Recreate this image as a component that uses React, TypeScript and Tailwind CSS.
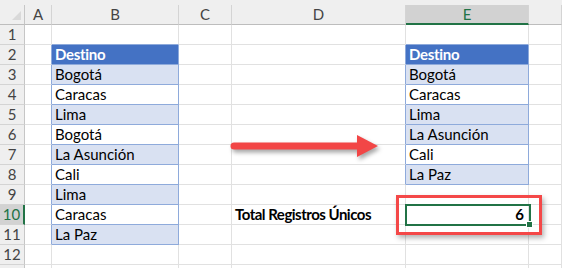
import React from 'react';

// column widths in px: row-number gutter, then A..F
const COLS = ['A', 'B', 'C', 'D', 'E', 'F'];
const ROWS = 13;

const listB: Record<number, string> = {
  2: 'Destino',
  3: 'Bogotá',
  4: 'Caracas',
  5: 'Lima',
  6: 'Bogotá',
  7: 'La Asunción',
  8: 'Cali',
  9: 'Lima',
  10: 'Caracas',
  11: 'La Paz',
};

const listE: Record<number, string> = {
  2: 'Destino',
  3: 'Bogotá',
  4: 'Caracas',
  5: 'Lima',
  6: 'La Asunción',
  7: 'Cali',
  8: 'La Paz',
};

// banded rows of each table
const bandB = [3, 5, 7, 9, 11];
const bandE = [3, 5, 6, 8];

const font = { fontFamily: 'Lato, "Open Sans", sans-serif' };

function cellClasses(col: string, row: number) {
  let bg = 'bg-white';
  let right = 'border-r-[#e1e1e1]';
  let bottom = 'border-b-[#e1e1e1]';

  const inB = col === 'B' && row >= 2 && row <= 11;
  const inE = col === 'E' && row >= 2 && row <= 8;

  if (inB || inE) {
    right = 'border-r-[#8eaadb]';
    bottom = 'border-b-[#8eaadb]';
    if (row === 2) bg = 'bg-[#4472c4]';
    else if ((inB && bandB.includes(row)) || (inE && bandE.includes(row))) bg = 'bg-[#d9e1f2]';
  }
  // left edges of the tables sit on the neighbour's right border
  if (col === 'A' && row >= 2 && row <= 11) right = 'border-r-[#8eaadb]';
  if (col === 'D' && row >= 2 && row <= 8) right = 'border-r-[#8eaadb]';
  // top edges sit on the row above
  if ((col === 'B' || col === 'E') && row === 1) bottom = 'border-b-[#8eaadb]';

  return `${bg} ${right} ${bottom}`;
}

function Cell({ col, row }: { col: string; row: number }) {
  let text = '';
  let extra = 'text-left pl-[3px]';
  let weight = '';
  let color = 'text-black';

  if (col === 'B' && listB[row]) text = listB[row];
  if (col === 'E' && listE[row]) text = listE[row];
  if ((col === 'B' || col === 'E') && row === 2) {
    weight = 'font-bold tracking-[-0.3px]';
    color = 'text-white';
  }
  if (col === 'D' && row === 10) {
    text = 'Total Registros Únicos';
    weight = 'font-bold tracking-[-0.5px]';
  }
  if (col === 'E' && row === 10) {
    text = '6';
    weight = 'font-bold';
    extra = 'text-right pr-[4px]';
  }

  return (
    <div
      className={`h-5 border-r border-b overflow-visible whitespace-nowrap text-[15px] leading-[19px] ${cellClasses(col, row)} ${extra} ${weight} ${color}`}
    >
      {text}
    </div>
  );
}

function RowHeader({ row }: { row: number }) {
  const active = row === 10;
  return (
    <div
      className={`h-5 border-b border-b-[#d4d4d4] text-center text-[15px] leading-[19px] ${
        active
          ? 'bg-[#d2d2d2] border-r-2 border-r-[#217346] text-[#217346]'
          : 'bg-[#efefef] border-r border-r-[#c6c6c6] text-[#444]'
      }`}
    >
      {row < ROWS ? row : ''}
    </div>
  );
}

function ColHeader({ col }: { col: string }) {
  const active = col === 'E';
  return (
    <div
      className={`h-5 border-r border-r-[#d4d4d4] text-center text-[15px] leading-[19px] ${
        active
          ? 'bg-[#d2d2d2] border-b-2 border-b-[#217346] text-[#217346]'
          : 'bg-[#efefef] border-b border-b-[#bdbdbd] text-[#444]'
      }`}
    >
      {col === 'F' ? '' : col}
    </div>
  );
}

export default function App() {
  const rows = Array.from({ length: ROWS }, (_, i) => i + 1);

  return (
    <div className="relative w-[562px] h-[268px] overflow-hidden bg-white" style={font}>
      <div className="h-[5px] bg-[#efefef]" />
      <div className="grid grid-cols-[25px_27px_127px_53px_174px_123px_33px]">
        {/* select-all corner */}
        <div className="relative h-5 bg-[#efefef] border-r border-r-[#c6c6c6] border-b border-b-[#bdbdbd]">
          <svg className="absolute left-[12px] top-[6px]" width="9" height="9" viewBox="0 0 9 9">
            <polygon points="9,0 9,9 0,9" fill="#d9d9d9" />
          </svg>
        </div>
        {COLS.map((c) => (
          <ColHeader key={c} col={c} />
        ))}

        {rows.map((r) => (
          <React.Fragment key={r}>
            <RowHeader row={r} />
            {COLS.map((c) => (
              <Cell key={c + r} col={c} row={r} />
            ))}
          </React.Fragment>
        ))}
      </div>

      {/* arrow between the two lists */}
      <svg
        className="absolute left-[226px] top-[130px] drop-shadow-[2px_3px_2px_rgba(0,0,0,0.35)]"
        width="160"
        height="34"
        viewBox="226 130 160 34"
      >
        <line x1="234" y1="146" x2="362" y2="146" stroke="#f24646" strokeWidth="7" strokeLinecap="round" />
        <polygon points="357,135 378,146 357,157" fill="#f24646" />
      </svg>

      {/* active cell E10 with fill handle */}
      <div className="absolute left-[405px] top-[204px] w-[126px] h-[22px] border-2 border-[#217346]" />
      <div className="absolute left-[526px] top-[221px] w-[7px] h-[7px] bg-[#217346] border border-white" />

      {/* highlight box */}
      <div className="absolute left-[396px] top-[195px] w-[146px] h-[40px] border-[3px] border-[#f44848] shadow-[2px_3px_5px_rgba(0,0,0,0.3)]" />
    </div>
  );
}
